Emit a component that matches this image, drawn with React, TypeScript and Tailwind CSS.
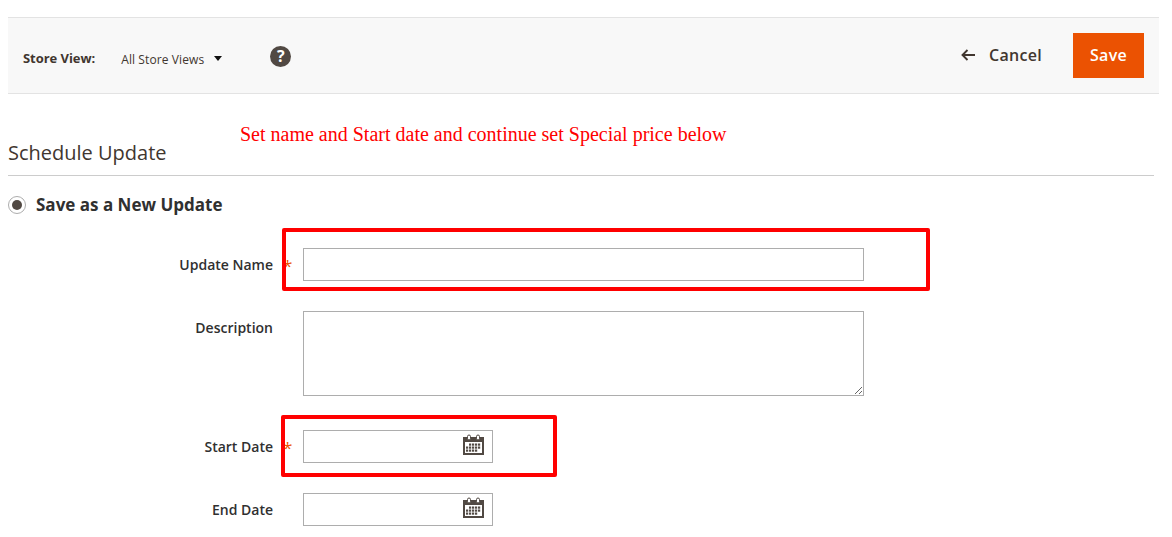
const font = { fontFamily: '"Open Sans", sans-serif' };

function CalendarIcon() {
  return (
    <svg width="21" height="21" viewBox="0 0 21 21" className="block">
      <rect x="0" y="3" width="21" height="18" fill="#514943" />
      <rect x="2" y="8" width="17" height="11" fill="#ffffff" />
      <rect x="4.5" y="1" width="3" height="5" rx="1.5" fill="#ffffff" stroke="#514943" strokeWidth="1" />
      <rect x="13.5" y="1" width="3" height="5" rx="1.5" fill="#ffffff" stroke="#514943" strokeWidth="1" />
      {[9.5, 12.5, 15.5].map((y) =>
        [3, 6, 9, 12, 15].map((x) =>
          (y === 9.5 && x === 3) || (y === 15.5 && x === 15) ? null : (
            <rect key={`${x}-${y}`} x={x} y={y} width="2.2" height="2.2" fill="#514943" />
          ),
        ),
      )}
    </svg>
  );
}

function Row({
  label,
  required,
  className,
  labelClass,
  children,
}: {
  label: string;
  required?: boolean;
  className?: string;
  labelClass?: string;
  children: React.ReactNode;
}) {
  return (
    <div className={`flex items-center ${className ?? ""}`}>
      <label className={`w-[265px] text-right text-[14px] font-semibold leading-[20px] text-[#303030] ${labelClass ?? ""}`}>{label}</label>
      <span className="w-[30px] pl-[10px] pt-[3px] text-[17px] leading-[20px] text-[#eb5202]">{required ? "*" : ""}</span>
      {children}
    </div>
  );
}

function DateInput() {
  return (
    <div className="flex h-[33px] w-[190px] items-center justify-end border border-[#adadad] bg-white pb-[4px] pr-[8px]">
      <CalendarIcon />
    </div>
  );
}

export default function App() {
  return (
    <div className="relative h-[537px] w-[1172px] overflow-hidden bg-white pl-2 pt-[17px]" style={font}>
      <div className="flex h-[77px] w-[1151px] items-center border-y border-[#e3e3e3] bg-[#f8f8f8] px-[15px]">
        <span className="mt-[4px] text-[13px] font-bold leading-[18px] tracking-[-0.05px] text-[#41362f]">Store View:</span>
        <span className="ml-[26px] mt-[8px] text-[12px] leading-[18px] tracking-[0.1px] text-[#41362f]">All Store Views</span>
        <span className="ml-[10px] mt-[6px] h-0 w-0 border-x-[4px] border-t-[5px] border-x-transparent border-t-[#111111]" />
        <span className="ml-[48px] mt-[1px] flex h-[21px] w-[21px] items-center justify-center rounded-full bg-[#514943] text-[16px] font-bold leading-none text-white">
          ?
        </span>
        <span className="ml-auto -mt-[1px] flex items-center text-[#41362f]">
          <svg width="14" height="12" viewBox="0 0 14 12" fill="none" stroke="#41362f" strokeWidth="1.9">
            <path d="M14 6H1.5M6.5 1 1.5 6l5 5" />
          </svg>
          <span className="ml-[14px] text-[16px] font-semibold leading-[22px] tracking-[0.3px]">Cancel</span>
        </span>
        <button className="ml-[31px] h-[45px] w-[71px] bg-[#eb5202] pb-[2px] text-[16px] font-semibold tracking-[0.3px] text-white">
          Save
        </button>
      </div>

      <h2 className="mt-[45px] w-[1146px] border-b border-[#cccccc] pb-[9px] text-[20px] font-normal leading-[27px] text-[#41362f]">
        Schedule Update
      </h2>

      <div className="mt-[17px] flex items-center">
        <span className="flex h-[18px] w-[18px] items-center justify-center rounded-full border border-[#adadad] bg-white">
          <span className="h-[10px] w-[10px] rounded-full bg-[#514943]" />
        </span>
        <span className="ml-[10px] text-[17px] font-bold leading-[24px] text-[#303030]">Save as a New Update</span>
      </div>

      <Row label="Update Name" required className="mt-[31px]">
        <input className="h-[33px] w-[561px] border border-[#adadad] bg-white" />
      </Row>
      <Row label="Description" className="mt-[30px] !items-start" labelClass="pt-[7px]">
        <textarea className="block h-[85px] w-[561px] border border-[#adadad] bg-white" />
      </Row>
      <Row label="Start Date" required className="mt-[34px]">
        <DateInput />
      </Row>
      <Row label="End Date" className="mt-[30px]">
        <DateInput />
      </Row>

      <p
        className="absolute left-[240px] top-[122px] text-[20px] leading-[24px] text-[#ff0000]"
        style={{ fontFamily: '"Liberation Serif", serif' }}
      >
        Set name and Start date and continue set Special price below
      </p>
      <div className="pointer-events-none absolute left-[282px] top-[228px] h-[63px] w-[648px] rounded-[2px] border-4 border-[#ff0000]" />
      <div className="pointer-events-none absolute left-[281px] top-[415px] h-[62px] w-[276px] rounded-[2px] border-4 border-[#ff0000]" />
    </div>
  );
}
